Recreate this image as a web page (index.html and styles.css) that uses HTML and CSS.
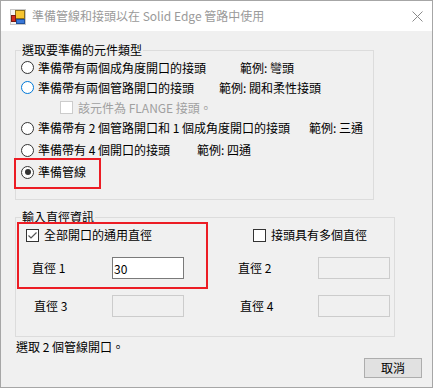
FILE: index.html
```html
<!DOCTYPE html>
<html>
<head>
  <title>準備管線和接頭以在 Solid Edge 管路中使用</title>
  <link rel="stylesheet" href="styles.css">
</head>
<body>
  <div class="window">
    <div class="titlebar">
      <svg class="app-icon" width="16" height="16" viewBox="0 0 16 16">
        <rect x="0.5" y="0.5" width="15" height="15" fill="#f4f4f4" stroke="#c8c8c8"/>
        <rect x="5.5" y="1.5" width="9" height="8" fill="#f7c531" stroke="#8a6d1a"/>
        <rect x="1.5" y="6.5" width="4" height="6" fill="#d42b1e" stroke="#7a1a12"/>
        <rect x="6.5" y="10.5" width="8" height="4" fill="#3a78d8" stroke="#1f4f9a"/>
      </svg>
      <span class="title">準備管線和接頭以在 Solid Edge 管路中使用</span>
      <svg class="close" width="11" height="11" viewBox="0 0 11 11">
        <path d="M0.5 0.5 L10.5 10.5 M10.5 0.5 L0.5 10.5" stroke="#8a8a8a" stroke-width="1"/>
      </svg>
    </div>

    <div class="content">
      <fieldset class="group type-group">
        <legend>選取要準備的元件類型</legend>
        <div class="opt h19">
          <span class="label w1"><span class="radio"></span>準備帶有兩個成角度開口的接頭</span>
          <span>範例: 彎頭</span>
        </div>
        <div class="opt h21">
          <span class="label w2"><span class="radio focus"></span>準備帶有兩個管路開口的接頭</span>
          <span>範例: 閥和柔性接頭</span>
        </div>
        <div class="opt h19 sub">
          <span class="label"><span class="check off"></span>該元件為 FLANGE 接頭。</span>
        </div>
        <div class="opt">
          <span class="label w3"><span class="radio"></span>準備帶有 2 個管路開口和 1 個成角度開口的接頭</span>
          <span>範例: 三通</span>
        </div>
        <div class="opt">
          <span class="label w4"><span class="radio"></span>準備帶有 4 個開口的接頭</span>
          <span>範例: 四通</span>
        </div>
        <div class="opt">
          <span class="label"><span class="radio on"></span>準備管線</span>
        </div>
      </fieldset>

      <fieldset class="group dia-group">
        <legend>輸入直徑資訊</legend>
        <div class="checks">
          <span class="label"><span class="check">
            <svg width="11" height="11" viewBox="0 0 11 11"><path d="M1.5 5.5 L4 8 L9.5 2.5" fill="none" stroke="#555" stroke-width="1.2"/></svg>
          </span>全部開口的通用直徑</span>
          <span class="label"><span class="check"></span>接頭具有多個直徑</span>
        </div>
        <div class="dia-row">
          <span>直徑 1</span>
          <input class="field" value="30">
          <span></span>
          <span>直徑 2</span>
          <input class="field" disabled>
        </div>
        <div class="dia-row low">
          <span class="nudge">直徑 3</span>
          <input class="field" disabled>
          <span></span>
          <span class="nudge">直徑 4</span>
          <input class="field" disabled>
        </div>
      </fieldset>

      <div class="status">選取 2 個管線開口。</div>
      <div class="actions">
        <button class="btn">取消</button>
      </div>

      <div class="mark mark-pipe"></div>
      <div class="mark mark-dia"></div>
    </div>
  </div>
</body>
</html>
```

FILE: styles.css
```css
html, body { margin: 0; padding: 0; background: #fff; }
body { font-family: "Noto Sans CJK TC", "Noto Sans", sans-serif; font-size: 12px; color: #000; }

.window { width: 433px; height: 388px; box-sizing: border-box; border: 1px solid #a6a6a6; display: flex; flex-direction: column; }
.titlebar { height: 30px; background: #fff; display: flex; align-items: center; flex: none; }
.app-icon { margin-left: 9px; margin-top: 1px; }
.title { margin-left: 6px; color: #9a9a9a; font-size: 12px; line-height: 16px; }
.close { margin-left: auto; margin-right: 9px; }

.content { flex: 1; background: #f0f0f0; position: relative; }

.group { margin: 0 0 0 14px; padding: 0 0 0 5px; border: 1px solid #dcdcdc; box-sizing: border-box; min-width: 0; }
.group legend { padding: 0 1px; line-height: 16px; margin-left: 0; }
.type-group { margin-top: 11px; width: 359px; padding-bottom: 16px; }
.dia-group { margin-top: 9px; width: 380px; padding-top: 3px; padding-bottom: 19px; }

.opt { height: 22px; display: flex; align-items: center; line-height: 16px; }
.opt.h19 { height: 19px; }
.opt.h21 { height: 21px; }
.opt.sub { padding-left: 39px; color: #a0a0a0; }
.label { display: inline-flex; align-items: center; }
.w1 { width: 219px; }
.w2 { width: 198px; }
.w3 { width: 288px; }
.w4 { width: 176px; }

.radio { width: 13px; height: 13px; box-sizing: border-box; border: 1px solid #333; border-radius: 50%; background: #fff; margin-right: 4px; display: inline-flex; align-items: center; justify-content: center; flex: none; }
.radio.focus { border-color: #0078d7; }
.radio.on::after { content: ""; width: 6px; height: 6px; border-radius: 50%; background: #333; }

.check { width: 13px; height: 13px; box-sizing: border-box; border: 1px solid #333; background: #fff; margin-right: 5px; display: inline-flex; align-items: center; justify-content: center; flex: none; }
.check.off { border-color: #cccccc; background: #fff; }

.checks { display: flex; height: 14px; align-items: center; padding-left: 5px; line-height: 16px; }
.checks .label:first-child { width: 227px; }

.dia-row { display: grid; grid-template-columns: 80px 72px 54px 80px 72px; align-items: center; padding-left: 11px; margin-top: 15px; height: 22px; line-height: 16px; }
.dia-row.low { margin-top: 16px; }
.nudge { padding-left: 2px; }

.field { height: 22px; width: 72px; box-sizing: border-box; border: 1px solid #7a7a7a; background: #fff; font-family: "Noto Sans CJK TC", sans-serif; font-size: 12px; padding: 0 1px; margin: 0; color: #000; outline: none; }
.field:disabled { border-color: #cccccc; background: #f0f0f0; }

.status { margin: 2px 0 0 15px; line-height: 16px; }
.actions { display: flex; justify-content: flex-end; margin-top: 3px; padding-right: 10px; }
.btn { width: 58px; height: 20px; box-sizing: border-box; border: 1px solid #adadad; background: #e1e1e1; font-family: "Noto Sans CJK TC", sans-serif; font-size: 12px; padding: 0; line-height: 16px; color: #000; }

.mark { position: absolute; border: 2px solid #ec1c24; box-sizing: border-box; }
.mark-pipe { left: 13px; top: 127px; width: 87px; height: 31px; }
.mark-dia { left: 16px; top: 191px; width: 191px; height: 67px; }
```
